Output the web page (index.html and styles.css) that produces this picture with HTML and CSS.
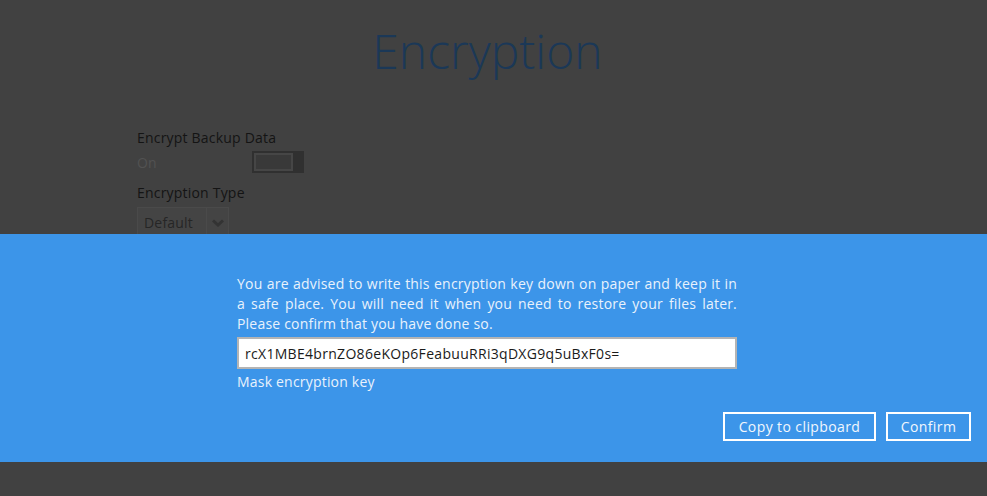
FILE: index.html
```html
<!DOCTYPE html>
<html lang="en">
<head>
    <meta charset="UTF-8">
    <title>Encryption</title>
    <link rel="stylesheet" href="styles.css">
</head>
<body>
    <div class="page">
        <h1 class="title">Encryption</h1>

        <div class="settings">
            <div class="field-label">Encrypt Backup Data</div>
            <div class="toggle-row">
                <span class="toggle-text">On</span>
                <span class="toggle"><span class="toggle-knob"></span></span>
            </div>
            <div class="field-label">Encryption Type</div>
            <div class="select">
                <span class="select-value">Default</span>
                <span class="select-arrow">
                    <svg width="12" height="8" viewBox="0 0 12 8"><path d="M1 1.5 L6 6 L11 1.5" fill="none" stroke="#333" stroke-width="3"/></svg>
                </span>
            </div>
        </div>
    </div>

    <!-- Key confirmation panel -->
    <div class="panel">
        <div class="panel-body">
            <p class="advice">You are advised to write this encryption key down on paper and keep it in a safe place. You will need it when you need to restore your files later. Please confirm that you have done so.</p>
            <input class="key-input" type="text" value="rcX1MBE4brnZO86eKOp6FeabuuRRi3qDXG9q5uBxF0s=">
            <div class="mask-link">Mask encryption key</div>
        </div>
        <div class="panel-actions">
            <button class="btn btn-copy">Copy to clipboard</button>
            <button class="btn btn-confirm">Confirm</button>
        </div>
    </div>
</body>
</html>
```

FILE: styles.css
```css
html, body {
    margin: 0;
    padding: 0;
}
body {
    font-family: "Open Sans", "Noto Sans", sans-serif;
    background-color: #414141;
    width: 987px;
    height: 496px;
    overflow: hidden;
    letter-spacing: 0.2px;
}
.page {
    height: 234px;
    overflow: hidden;
}
.title {
    margin: 0;
    padding-top: 20px;
    padding-right: 12px;
    font-size: 48px;
    font-weight: 300;
    line-height: 62px;
    letter-spacing: 0;
    color: #1b3857;
    text-align: center;
}
.settings {
    padding: 46px 0 0 137px;
}
.field-label {
    font-size: 14px;
    line-height: 20px;
    color: #141414;
}
.toggle-row {
    display: flex;
    align-items: center;
    height: 24px;
    margin: 2px 0 9px;
}
.toggle-text {
    width: 115px;
    font-size: 14px;
    color: #525252;
}
.toggle {
    display: flex;
    width: 52px;
    height: 22px;
    background-color: #303030;
    box-sizing: border-box;
    padding: 2px;
}
.toggle-knob {
    width: 35px;
    height: 14px;
    border: 2px solid #464646;
    background-color: #393939;
    box-sizing: content-box;
}
.select {
    display: flex;
    width: 92px;
    height: 32px;
    margin-top: 4px;
    border: 1px solid #4a4a4a;
    box-sizing: border-box;
    background-color: #444;
}
.select-value {
    width: 62px;
    padding-left: 6px;
    font-size: 14px;
    line-height: 30px;
    color: #262626;
}
.select-arrow {
    flex: 1;
    display: flex;
    align-items: center;
    justify-content: center;
    border-left: 1px solid #4a4a4a;
}
.panel {
    background-color: #3c95e9;
    height: 228px;
    box-sizing: border-box;
    padding-top: 40px;
}
.panel-body {
    width: 500px;
    margin-left: 237px;
}
.advice {
    margin: 0;
    font-size: 14px;
    line-height: 20px;
    color: #e9f2fc;
    text-align: justify;
}
.key-input {
    display: block;
    width: 500px;
    height: 32px;
    margin-top: 3px;
    padding: 0 6px;
    border: 2px solid #b4b4b4;
    box-sizing: border-box;
    font-family: "Open Sans", "Noto Sans", sans-serif;
    font-size: 14px;
    letter-spacing: 0.3px;
    color: #1a1a1a;
    outline: none;
}
.mask-link {
    margin-top: 3px;
    font-size: 14px;
    line-height: 20px;
    color: #e9f2fc;
}
.panel-actions {
    display: flex;
    justify-content: flex-end;
    gap: 10px;
    margin-top: 20px;
    padding-right: 16px;
}
.btn {
    height: 29px;
    padding: 0;
    background: transparent;
    border: 2px solid #fff;
    color: #f2f7fd;
    font-family: "Open Sans", "Noto Sans", sans-serif;
    font-size: 14px;
    letter-spacing: 0.4px;
    cursor: pointer;
}
.btn-copy {
    width: 153px;
}
.btn-confirm {
    width: 85px;
}
```
